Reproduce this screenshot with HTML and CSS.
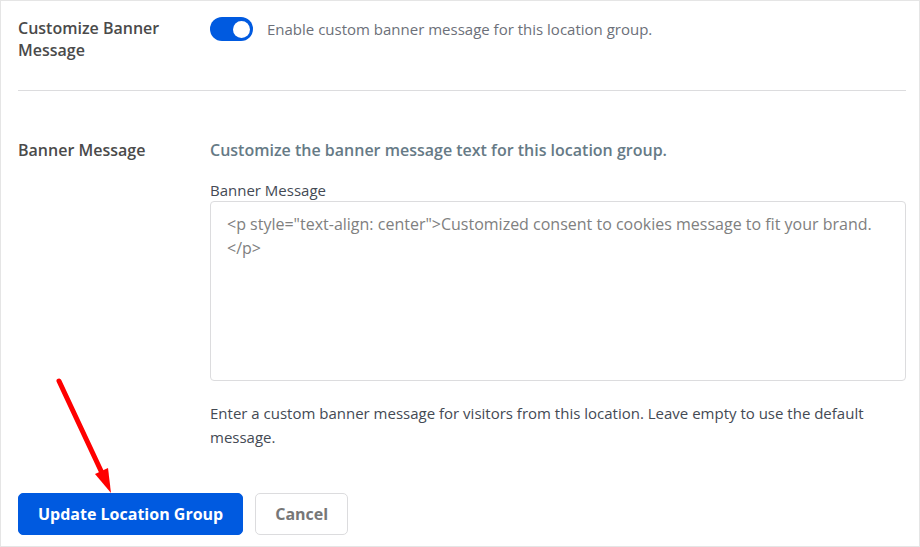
FILE: index.html
```html
<!DOCTYPE html>
<html lang="en">
<head>
  <meta charset="UTF-8">
  <meta name="viewport" content="width=device-width, initial-scale=1.0">
  <title>Edit Location Group</title>
  <link rel="stylesheet" href="styles.css">
</head>
<body>
  <form class="settings-panel" id="locationGroupForm">
    <div class="setting-row toggle-row">
      <label class="setting-name" for="customizeBanner">Customize Banner Message</label>
      <div class="toggle-field">
        <input type="checkbox" class="toggle" id="customizeBanner" name="customizeBanner" checked>
        <label class="toggle-text" for="customizeBanner">Enable custom banner message for this location group.</label>
      </div>
    </div>

    <div class="setting-row message-row">
      <h2 class="setting-name">Banner Message</h2>
      <div class="message-field">
        <p class="intro">Customize the banner message text for this location group.</p>
        <label class="field-label" for="bannerMessage">Banner Message</label>
        <textarea class="message-input" id="bannerMessage" name="bannerMessage" placeholder="&lt;p style=&quot;text-align: center&quot;&gt;Customized consent to cookies message to fit your brand.&lt;/p&gt;"></textarea>
        <p class="help-text">Enter a custom banner message for visitors from this location. Leave empty to use the default message.</p>
      </div>
    </div>

    <div class="actions">
      <button type="submit" class="btn btn-primary">Update Location Group</button>
      <button type="button" class="btn btn-secondary">Cancel</button>
      <svg class="pointer-arrow" width="60" height="118" viewBox="0 0 60 118" aria-hidden="true">
        <line x1="7" y1="6" x2="50" y2="98" stroke="#ff0000" stroke-width="5" stroke-linecap="round"/>
        <path d="M43 99 L56 93 L59 118 Z" fill="#ff0000"/>
      </svg>
    </div>
  </form>
</body>
</html>
```

FILE: styles.css
```css
* {
  box-sizing: border-box;
}
body {
  margin: 0;
  font-family: "Open Sans", "Noto Sans", sans-serif;
  font-size: 15px;
  line-height: 24px;
  color: #444a54;
  background-color: #fff;
}
.settings-panel {
  min-height: 100vh;
  padding: 16px 13px 11px 17px;
  border: 1px solid #e5e5e5;
}
.setting-row {
  display: grid;
  grid-template-columns: 160px 1fr;
  column-gap: 32px;
}
.setting-name {
  margin: 0;
  font-size: 16px;
  font-weight: 600;
  line-height: 22px;
  color: #4a4a4a;
}
.toggle-row {
  padding-bottom: 29px;
  border-bottom: 1px solid #dcdcde;
}
.toggle-field {
  display: flex;
  align-items: center;
  align-self: start;
  gap: 14px;
}
.toggle {
  appearance: none;
  display: flex;
  justify-content: flex-end;
  align-items: center;
  width: 43px;
  height: 24px;
  margin: 0;
  padding: 0 3px;
  border-radius: 12px;
  background-color: #c3c4c7;
  cursor: pointer;
}
.toggle::before {
  content: "";
  width: 17px;
  height: 17px;
  border-radius: 50%;
  background-color: #fff;
}
.toggle:checked {
  background-color: #005ae0;
}
.toggle:not(:checked) {
  justify-content: flex-start;
}
.toggle-text {
  color: #6c7079;
}
.message-row {
  padding-top: 48px;
}
.intro {
  margin: 0 0 18px;
  font-size: 16px;
  font-weight: 600;
  line-height: 22px;
  color: #667a86;
}
.field-label {
  display: block;
  line-height: 22px;
}
.message-input {
  display: block;
  width: 100%;
  height: 180px;
  padding: 10px 16px;
  border: 1px solid #dcdcde;
  border-radius: 4px;
  font-family: inherit;
  font-size: 16px;
  line-height: 24px;
  color: #444a54;
  resize: none;
}
.message-input::placeholder {
  color: #808080;
}
.help-text {
  margin: 20px 0 0;
}
.actions {
  position: relative;
  display: flex;
  gap: 12px;
  margin-top: 44px;
}
.btn {
  height: 42px;
  padding: 0 19px;
  border: 1px solid #dcdcde;
  border-radius: 5px;
  font-family: inherit;
  font-size: 16px;
  font-weight: 700;
  cursor: pointer;
}
.btn-primary {
  border-color: #005ae0;
  background-color: #005ae0;
  color: #fff;
}
.btn-secondary {
  background-color: #fff;
  color: #777;
}
.pointer-arrow {
  position: absolute;
  left: 34px;
  bottom: 42px;
  pointer-events: none;
}
```
